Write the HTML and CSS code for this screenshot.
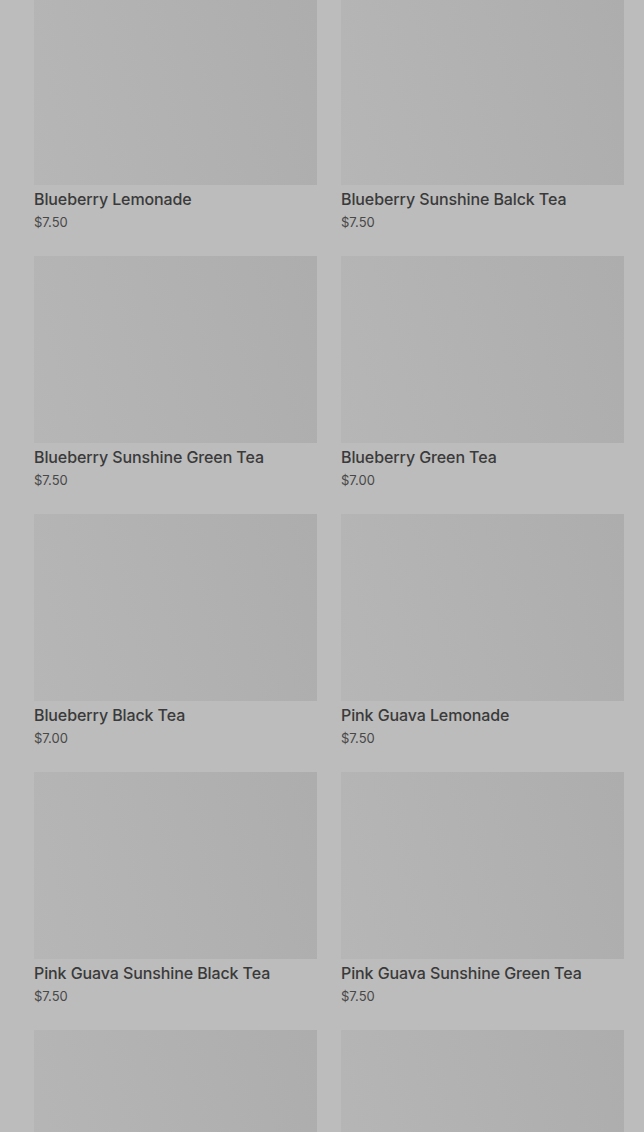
FILE: index.html
```html
<!DOCTYPE html>
<html lang="en">
<head>
    <meta charset="UTF-8">
    <meta name="viewport" content="width=device-width, initial-scale=1.0">
    <title>Menu</title>
    <link rel="stylesheet" href="styles.css">
</head>
<body>
    <div class="product-grid">
        <div class="product-card">
            <div class="product-image"></div>
            <h3 class="product-name">Blueberry Lemonade</h3>
            <p class="product-price">$7.50</p>
        </div>
        <div class="product-card">
            <div class="product-image"></div>
            <h3 class="product-name">Blueberry Sunshine Balck Tea</h3>
            <p class="product-price">$7.50</p>
        </div>
        <div class="product-card">
            <div class="product-image"></div>
            <h3 class="product-name">Blueberry Sunshine Green Tea</h3>
            <p class="product-price">$7.50</p>
        </div>
        <div class="product-card">
            <div class="product-image"></div>
            <h3 class="product-name">Blueberry Green Tea</h3>
            <p class="product-price">$7.00</p>
        </div>
        <div class="product-card">
            <div class="product-image"></div>
            <h3 class="product-name">Blueberry Black Tea</h3>
            <p class="product-price">$7.00</p>
        </div>
        <div class="product-card">
            <div class="product-image"></div>
            <h3 class="product-name">Pink Guava Lemonade</h3>
            <p class="product-price">$7.50</p>
        </div>
        <div class="product-card">
            <div class="product-image"></div>
            <h3 class="product-name">Pink Guava Sunshine Black Tea</h3>
            <p class="product-price">$7.50</p>
        </div>
        <div class="product-card">
            <div class="product-image"></div>
            <h3 class="product-name">Pink Guava Sunshine Green Tea</h3>
            <p class="product-price">$7.50</p>
        </div>
        <!-- next row, still loading -->
        <div class="product-card">
            <div class="product-image"></div>
        </div>
        <div class="product-card">
            <div class="product-image"></div>
        </div>
    </div>
</body>
</html>
```

FILE: styles.css
```css
body {
    margin: 0;
    font-family: Inter, "Noto Sans", sans-serif;
    background-color: #bcbcbc;
    overflow: hidden;
}

.product-grid {
    display: grid;
    grid-template-columns: 283px 283px;
    column-gap: 24px;
    row-gap: 24px;
    padding: 0 20px 0 34px;
    margin-top: -2px;
}

.product-image {
    height: 187px;
    background: linear-gradient(75deg, #b6b6b6, #adadad); /* placeholder photo */
}

.product-name {
    margin: 2px 0 0;
    font-size: 16px;
    font-weight: 500;
    line-height: 24px;
    color: #3a3a3a;
    letter-spacing: -0.1px;
}

.product-price {
    margin: 1px 0 0;
    font-size: 13px;
    line-height: 20px;
    color: #484848;
}
```
